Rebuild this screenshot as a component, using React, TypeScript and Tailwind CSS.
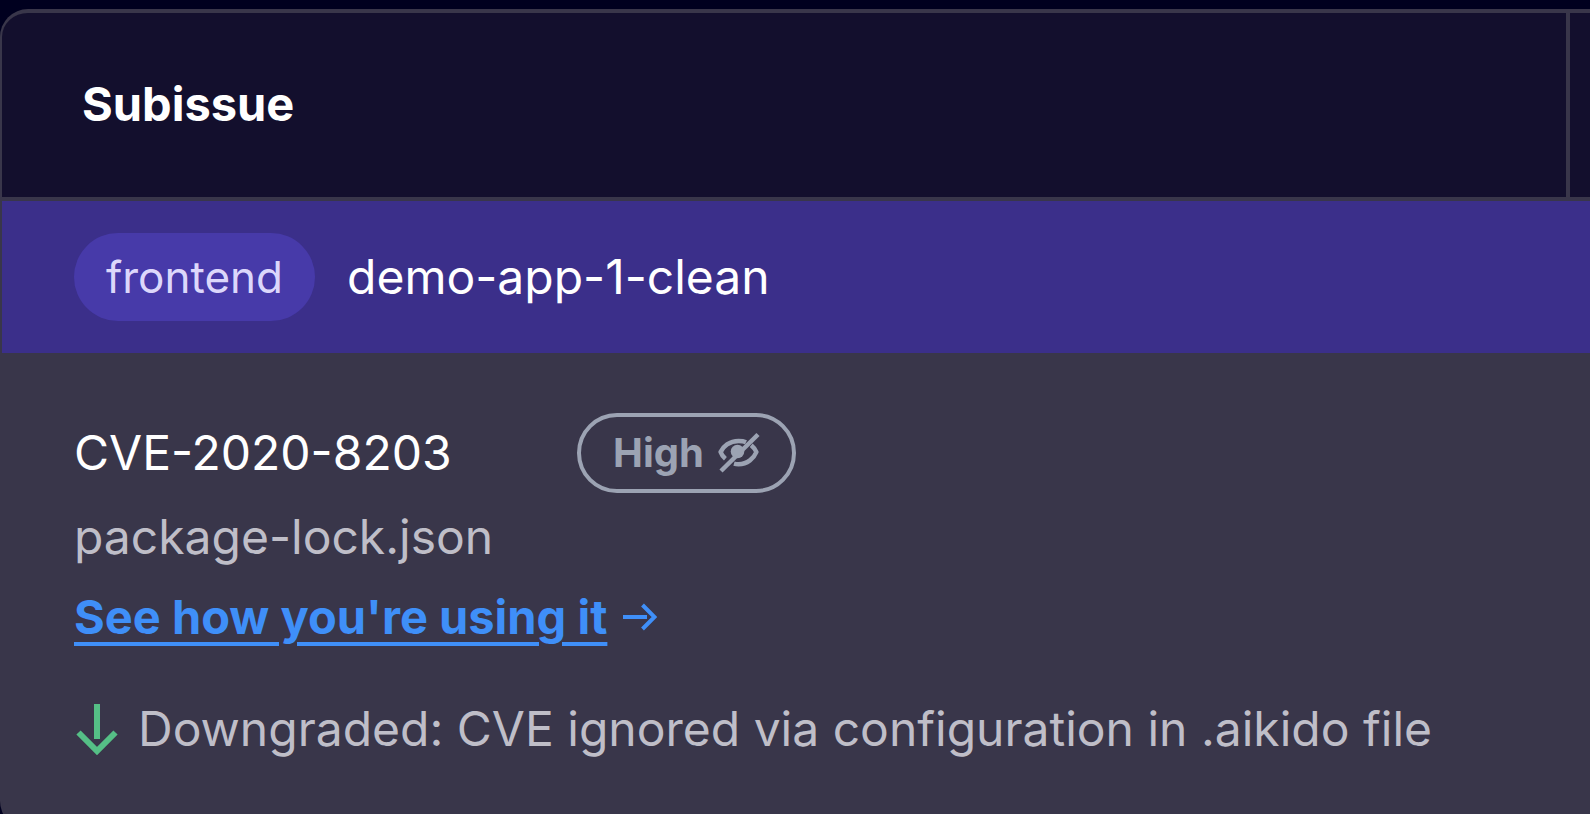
import { ReactNode } from "react";

interface Subissue {
  cve: string;
  file: string;
  severity: string;
  note: string;
}

const issues: Subissue[] = [
  {
    cve: "CVE-2020-8203",
    file: "package-lock.json",
    severity: "High",
    note: "Downgraded: CVE ignored via configuration in .aikido file",
  },
];

function EyeSlashIcon() {
  return (
    <svg
      viewBox="0 0 42 42"
      className="w-[42px] h-[42px]"
      fill="none"
      stroke="currentColor"
      strokeWidth="4.5"
      strokeLinejoin="round"
      aria-hidden="true"
    >
      <path d="M28 10.2C25.8 9.2 23.2 9 20.5 9C11.5 9 5 14.5 2.6 20C3.5 22.5 5 24.8 7.4 26.8" />
      <path d="M33.2 13.2C35.6 15.2 37.4 17.6 38.4 20C36 26 29.5 32.2 20.5 32.2C19 32.2 17.4 32 16 31.6" />
      <circle cx="19.5" cy="19.5" r="6.8" fill="currentColor" stroke="none" />
      <path d="M3 39L40 2.5" />
    </svg>
  );
}

function ArrowRightIcon() {
  return (
    <svg
      viewBox="0 0 34 30"
      className="w-[34px] h-[30px]"
      fill="none"
      stroke="currentColor"
      strokeWidth="4"
      aria-hidden="true"
    >
      <path d="M0 15H24M19.5 3L31.5 15L19.5 27" />
    </svg>
  );
}

function ArrowDownIcon() {
  return (
    <svg
      viewBox="0 0 44 52"
      className="w-11 h-[52px] text-[#55bf86]"
      fill="none"
      stroke="currentColor"
      strokeWidth="6"
      aria-hidden="true"
    >
      <path d="M23 1V36M4.5 29.5L23 48L41.5 29.5" />
    </svg>
  );
}

function SeverityBadge({ children }: { children: ReactNode }) {
  return (
    <span className="flex items-center gap-3.5 h-20 px-8 rounded-full border-4 border-[#9ca3b3] text-[#9ca3b3] text-[40px] font-bold">
      {children}
      <EyeSlashIcon />
    </span>
  );
}

export default function App() {
  return (
    <main className="h-screen overflow-hidden bg-[#00001f] pt-[9px] font-[Inter,sans-serif] text-5xl text-white">
      <div className="overflow-hidden rounded-l-[28px] border-y-4 border-l-2 border-[#39364a] bg-[#39364a]">
        <table className="w-full border-collapse text-left">
          <thead className="bg-[#130f2d]">
            <tr className="h-[186px] border-b-4 border-[#39364a]">
              <th scope="col" className="px-20 pb-1 text-[47px] font-bold">
                Subissue
              </th>
              <td className="w-[22px] border-l-4 border-[#39364a]" />
            </tr>
          </thead>
          <tbody>
            <tr className="bg-[#3b2f8a]">
              <td colSpan={2} className="px-[72px] py-8">
                <div className="flex items-center gap-8">
                  <span className="flex items-center h-[88px] px-8 rounded-full bg-[#473aa9] text-[#dcd7fb] text-[44px]">
                    frontend
                  </span>
                  <span>demo-app-1-clean</span>
                </div>
              </td>
            </tr>
            {issues.map((issue) => (
              <tr key={issue.cve}>
                <td colSpan={2} className="px-[72px] pt-[60px] pb-14">
                  <div className="flex items-center justify-between w-[722px]">
                    <span>{issue.cve}</span>
                    <SeverityBadge>{issue.severity}</SeverityBadge>
                  </div>
                  <p className="mt-1 leading-[80px] text-[#bfbec8]">
                    {issue.file}
                  </p>
                  <a
                    href="#usage"
                    className="flex items-center gap-4 w-fit leading-[80px] text-[47px] font-bold text-[#3f8ff8]"
                  >
                    <span className="underline decoration-4 underline-offset-8">
                      See how you're using it
                    </span>
                    <ArrowRightIcon />
                  </a>
                  <div className="flex items-center gap-5 mt-8 leading-[80px] text-[#bfbec8]">
                    <ArrowDownIcon />
                    <span className="whitespace-nowrap">{issue.note}</span>
                  </div>
                </td>
              </tr>
            ))}
          </tbody>
        </table>
      </div>
    </main>
  );
}
